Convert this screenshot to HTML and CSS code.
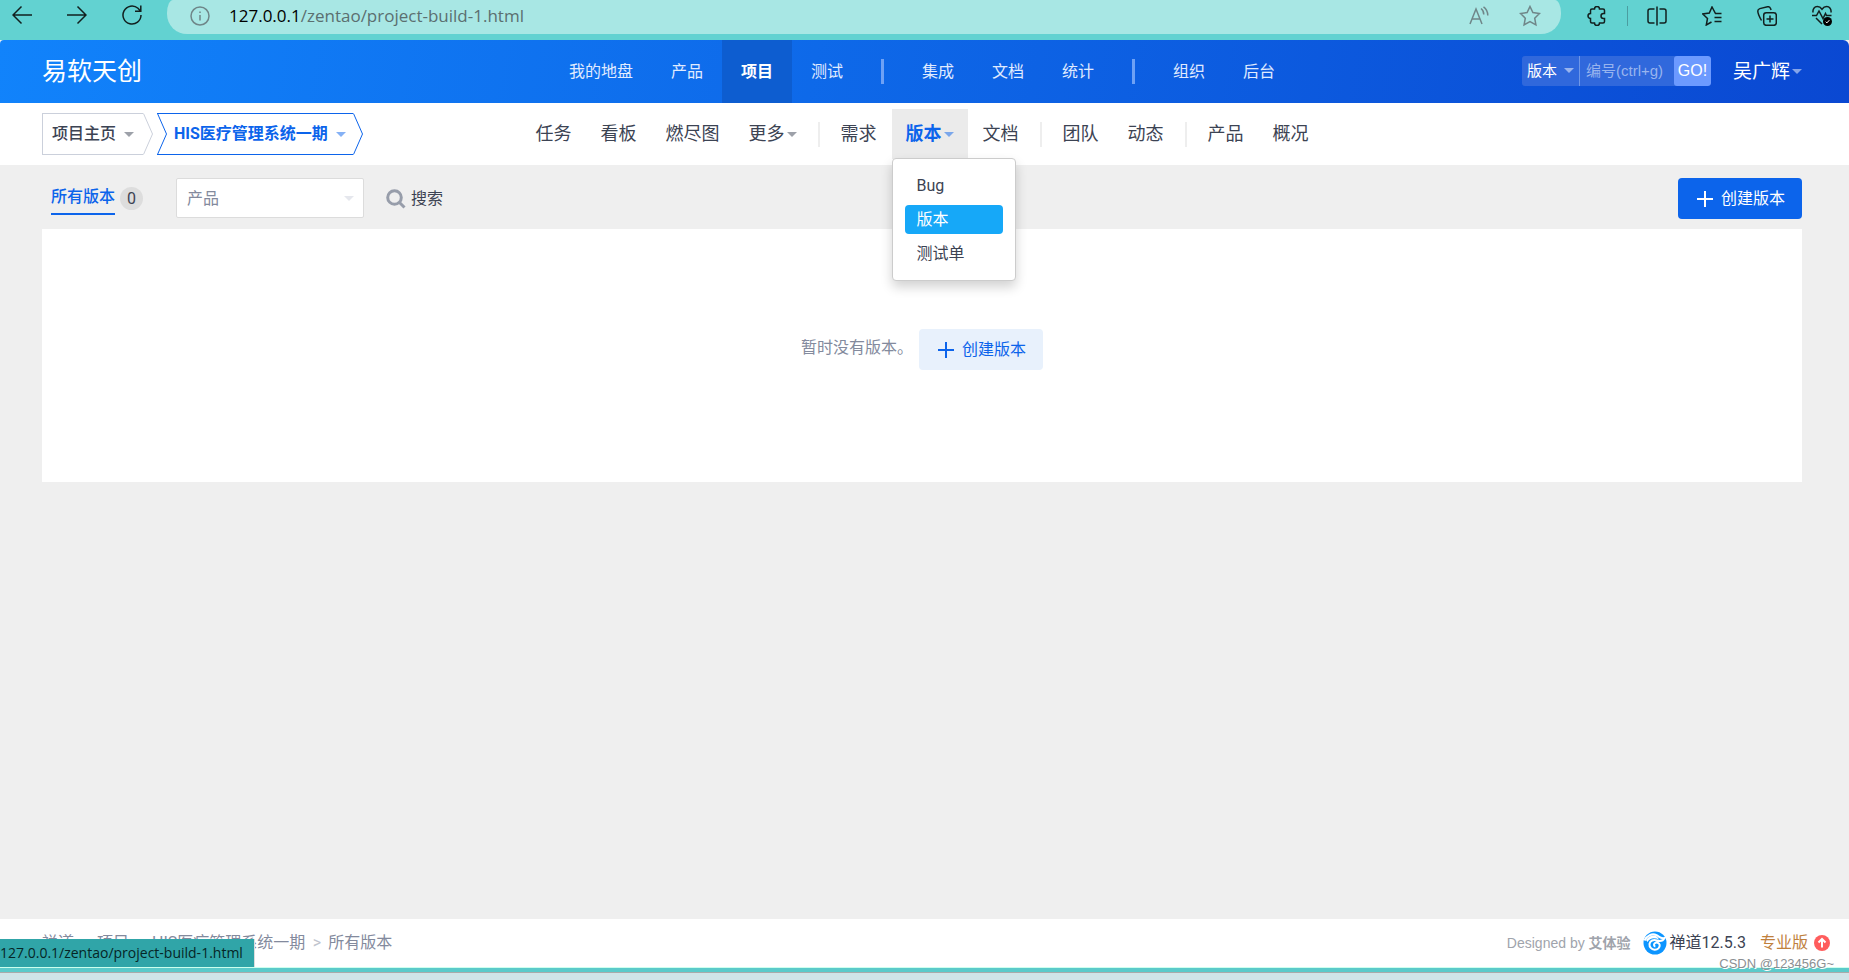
FILE: index.html
```html
<!DOCTYPE html>
<html lang="zh-CN">
<head>
<meta charset="utf-8">
<title>所有版本 - 禅道</title>
<link rel="stylesheet" href="styles.css">
</head>
<body>
<div class="window">
  <div class="browser">
    <button class="tool" aria-label="后退"><svg width="20" height="20" viewBox="0 0 20 20"><path d="M20 10H1M9.500 1.500L1 10l8.500 8.500"/></svg></button>
    <button class="tool" aria-label="前进"><svg width="20" height="20" viewBox="0 0 20 20"><path d="M0 10h19M10.500 1.500L19 10l-8.500 8.500"/></svg></button>
    <button class="tool" aria-label="刷新"><svg width="20" height="20" viewBox="0 0 20 20"><path d="M19 10a9 9 0 1 1-3-6.700L18.500 6M18.800 0.500V6.200H13"/></svg></button>
    <div class="address">
      <svg class="info" width="20" height="20" viewBox="0 0 20 20"><circle cx="10" cy="10" r="9"/><path d="M10 9v5.500M10 5.500v1.500"/></svg>
      <span class="url"><b>127.0.0.1</b>/zentao/project-build-1.html</span>
      <svg width="20" height="20" viewBox="0 0 20 20"><path d="M1 18L7 3l6 15M3.200 13h7.600M12 2.500c2 1.500 2.800 3.500 2.800 6M14.500 0.800c3 2.200 4.300 5 4.300 8.700"/></svg>
      <svg width="22" height="22" viewBox="0 0 22 22"><path d="M11 1.500l2.900 6.100 6.600.9-4.800 4.700 1.200 6.700-5.900-3.200-5.900 3.200 1.200-6.700L1.500 8.500l6.600-.9z"/></svg>
    </div>
    <div class="extensions">
      <button class="tool" aria-label="扩展"><svg width="20" height="20" viewBox="0 0 20 20"><path d="M5 3h2.500a2.500 2.500 0 0 1 5 0H16a1.500 1.500 0 0 1 1.500 1.500v3h-1a2.500 2.500 0 0 0 0 5h1v3A1.500 1.500 0 0 1 16 17h-3.500a2.500 2.500 0 0 1-5 0H5A1.500 1.500 0 0 1 3.500 15.500v-3a2.500 2.500 0 0 1 0-5v-3A1.500 1.500 0 0 1 5 3z"/></svg></button>
      <i class="tool-line"></i>
      <button class="tool" aria-label="分屏"><svg width="20" height="20" viewBox="0 0 20 20"><path d="M10 0.500v19M7.500 3H3a2 2 0 0 0-2 2v10a2 2 0 0 0 2 2h4.500M12.500 3H17a2 2 0 0 1 2 2v10a2 2 0 0 1-2 2h-4.500"/></svg></button>
      <button class="tool" aria-label="收藏夹"><svg width="20" height="20" viewBox="0 0 20 20"><path d="M19.500 7.500h-6L10 1 7.300 7 .8 8l4.700 4.500-1.200 6.500 5.200-3M12.500 11.500h7M12.500 15.500h7"/></svg></button>
      <button class="tool" aria-label="集锦"><svg width="20" height="20" viewBox="0 0 20 20"><rect x="6.700" y="6.700" width="12.600" height="12.600" rx="2.500"/><path d="M13 9.500v7M9.500 13h7M4.500 14.500C2.500 11 .8 7 .8 5c0-1.500.7-2 2-2.400L10.500.8c1.500-.3 2.500.3 3 1.600l.6 1.600"/></svg></button>
      <button class="tool" aria-label="浏览器概要"><svg width="20" height="21" viewBox="0 0 20 21"><path d="M1 7.500C.5 4 2.500 1.500 5.300 1.500c2 0 3.500 1 4.700 2.700 1.200-1.700 2.700-2.700 4.700-2.700C17.500 1.500 19.500 4 19 7.500M0 10.500h4.500L7 6l4 7.500 2.500-5 1 2h5M4 13l6 6"/><circle class="solid" cx="15.500" cy="16.500" r="4.500"/><path class="light" d="M13.700 16.700l1.200 1.200 2.500-2.800"/></svg></button>
    </div>
  </div>

  <header class="header">
    <a class="brand" href="#">易软天创</a>
    <nav class="main-nav">
      <a href="#">我的地盘</a><a href="#">产品</a><a class="active" href="#">项目</a><a href="#">测试</a>
      <i></i>
      <a href="#">集成</a><a href="#">文档</a><a href="#">统计</a>
      <i></i>
      <a href="#">组织</a><a href="#">后台</a>
    </nav>
    <div class="header-right">
      <form class="search">
        <button type="button" class="search-type">版本<span class="caret"></span></button>
        <input type="text" placeholder="编号(ctrl+g)" aria-label="编号">
        <button type="button" class="go">GO!</button>
      </form>
      <a class="user" href="#">吴广辉<span class="caret"></span></a>
    </div>
  </header>

  <div class="sub-header">
    <div class="crumbs">
      <a class="crumb" href="#"><span class="crumb-body">项目主页<span class="caret"></span></span><svg width="10" height="42" viewBox="0 0 10 42"><path d="M0.500 0.500L9.500 21 0.500 41.500"/></svg></a>
      <a class="crumb current" href="#"><svg width="10" height="42" viewBox="0 0 10 42"><path d="M0 .5h10M0 41.500h10M0.500 0.500L9.500 21 0.500 41.500"/></svg><span class="crumb-body">HIS医疗管理系统一期<span class="caret"></span></span><svg width="10" height="42" viewBox="0 0 10 42"><path d="M0.500 0.500L9.500 21 0.500 41.500"/></svg></a>
    </div>
    <nav class="sub-nav">
      <a href="#">任务</a><a href="#">看板</a><a href="#">燃尽图</a><a href="#">更多<span class="caret"></span></a>
      <i></i>
      <a href="#">需求</a>
      <div class="dropdown">
        <a class="active" href="#">版本<span class="caret"></span></a>
        <div class="menu"><a href="#">Bug</a><a class="selected" href="#">版本</a><a href="#">测试单</a></div>
      </div>
      <a href="#">文档</a>
      <i></i>
      <a href="#">团队</a><a href="#">动态</a>
      <i></i>
      <a href="#">产品</a><a href="#">概况</a>
    </nav>
  </div>

  <main class="main">
    <div class="toolbar">
      <a class="all" href="#"><span class="all-label">所有版本</span><span class="badge">0</span></a>
      <div class="picker"><select aria-label="产品"><option>产品</option></select><span class="caret"></span></div>
      <a class="find" href="#"><svg width="20" height="20" viewBox="0 0 20 20"><circle cx="8.500" cy="8.500" r="6.800"/><path d="M13.500 13.500l5 5"/></svg>搜索</a>
      <button class="btn primary"><svg width="16" height="16" viewBox="0 0 16 16"><path d="M8 0v16M0 8h16"/></svg>创建版本</button>
    </div>
    <section class="panel">
      <span class="empty">暂时没有版本。</span>
      <button class="btn soft"><svg width="16" height="16" viewBox="0 0 16 16"><path d="M8 0v16M0 8h16"/></svg>创建版本</button>
    </section>
  </main>

  <footer class="footer">
    <div class="path"><a href="#">禅道</a><i>&gt;</i><a href="#">项目</a><i>&gt;</i><a href="#">HIS医疗管理系统一期</a><i>&gt;</i><span>所有版本</span></div>
    <div class="powered">
      <span class="designed">Designed by <b>艾体验</b></span>
      <a class="version" href="#"><svg width="24" height="24" viewBox="0 0 24 24"><circle cx="12" cy="12" r="11.500" fill="#0c95ff"/><path d="M1.500 9.500C4 4.500 9 2 13.500 4.200c3 1.500 4 3.800 8 2.800-1.500 3-4.500 3.500-7.500 2.500C10.500 8.300 7 9.500 6.500 13c-.3 3 2 5.500 5 5.700 3.300.2 5.500-2.200 5.200-4.700-.4-2.300-3.300-3.200-4.900-1.800-1.300 1.100-1 3 .6 3.300" fill="none" stroke="#fff" stroke-width="2"/><path d="M3 9C6 4.500 11 3.500 14 5.500l2 3C11 6.500 7 7 4.500 11z" fill="#fff"/></svg>禅道12.5.3</a>
      <a class="pro" href="#">专业版<svg width="16" height="16" viewBox="0 0 16 16"><circle cx="8" cy="8" r="8" fill="#ff5d5d"/><path d="M8 12.500V4M4.500 7.500L8 4l3.500 3.500" fill="none" stroke="#fff" stroke-width="2"/></svg></a>
    </div>
    <span class="status">127.0.0.1/zentao/project-build-1.html</span>
    <span class="watermark">CSDN @123456G~</span>
  </footer>
  <div class="taskbar"></div>
</div>
</body>
</html>
```
FILE: styles.css
```css
* { box-sizing: border-box; }
body {
  margin: 0;
  font: 16px/24px Roboto, "Noto Sans CJK SC", sans-serif;
  color: #3c4353;
  background: #efefef;
}
a { color: inherit; text-decoration: none; }
button, input, select { font: inherit; color: inherit; border: 0; margin: 0; padding: 0; background: none; }
i { font-style: normal; }
svg { flex: none; }
.window { display: flex; flex-direction: column; min-height: 100vh; overflow: hidden; }
.caret {
  display: inline-block;
  border: 5px solid transparent;
  border-top-color: currentColor;
  border-bottom: 0;
  opacity: .5;
}

/* browser toolbar */
.browser { display: flex; align-items: flex-start; height: 40px; padding: 0 17px 0 12px; background: #62d2d1; }
.browser svg { display: block; fill: none; stroke: #12201f; stroke-width: 2px; }
.browser .tool svg { stroke-width: 1.5px; }
.tool { display: block; margin: 5px 35px 0 0; }
.browser .solid { fill: #000; stroke: none; }
.browser .light { stroke: #fff; stroke-width: 1px; }
.address {
  flex: 1;
  display: flex;
  align-items: center;
  gap: 20px;
  height: 34px;
  margin-left: -10px;
  padding: 0 20px 2px 23px;
  background: #a8e7e4;
  border-radius: 6px 6px 20px 20px / 13px 13px 20px 20px;
}
.browser .address svg { stroke: #6f8688; stroke-width: 1.5px; margin-right: 10px; }
.browser .address svg:last-child { margin-right: 0; }
.browser .address .info { margin-right: 0; }
.url { flex: 1; margin-left: -1px; font: 17px/24px "Open Sans", sans-serif; color: #5b6f70; }
.url b { font-weight: 400; color: #000; }
.extensions { display: flex; gap: 35px; margin-left: 26px; }
.extensions .tool { margin-right: 0; }
.tool-line { width: 1px; height: 20px; margin: 6px -16px 0 -15px; background: #4b9da0; }

/* header */
.header {
  display: grid;
  grid-template-columns: 1fr auto 1fr;
  align-items: center;
  height: 63px;
  padding: 0 47px 0 42px;
  color: #fff;
  background: linear-gradient(100deg, #1183fb, #0a48d2);
  border-radius: 4px 6px 0 0;
}
.brand { font-size: 25px; line-height: 36px; }
.main-nav { display: flex; align-items: center; }
.main-nav a { padding: 0 19px; line-height: 63px; color: #e0ebff; }
.main-nav .active { font-weight: 700; color: #fff; background: #0d5dd0; }
.main-nav i { width: 3px; height: 25px; margin: 0 19px; background: #6ea1f5; }
.header-right { display: flex; justify-content: flex-end; align-items: center; gap: 22px; }
.search { display: flex; height: 30px; margin-bottom: 2px; border-radius: 3px; overflow: hidden; background: #3068dc; font-size: 15px; }
.search-type { width: 58px; border-right: 1px solid #6e97e8; }
.search-type .caret { margin: 0 0 3px 7px; border-width: 5px 5px 0; }
.search input { width: 94px; padding: 0 6px; font: 15px/24px "Liberation Sans", "Noto Sans CJK SC", sans-serif; }
.search input::placeholder { color: #98b4ee; opacity: 1; }
.go { width: 37px; background: #6c9aff; border-radius: 3px; font: 16px/24px "Liberation Sans", sans-serif; }
.user { display: flex; align-items: center; font-size: 19px; gap: 2px; }

/* second bar */
.sub-header {
  display: grid;
  grid-template-columns: 1fr auto 1fr;
  align-items: center;
  height: 62px;
  padding: 0 47px 0 42px;
  background: #fff;
}
.crumbs { display: flex; gap: 4px; font-weight: 500; }
.crumb { display: flex; height: 42px; color: #3c4353; }
.crumb svg { fill: none; stroke: #cbd0db; }
.crumb-body { display: flex; align-items: center; gap: 8px; padding: 0 9px; border: 1px solid #cbd0db; border-right: 0; }
.current { font-weight: 700; color: #0c64eb; }
.current svg { stroke: #0c64eb; }
.current .crumb-body { padding: 0 7px; border-color: #0c64eb; border-left: 0; }
.sub-nav { display: flex; align-items: center; gap: 1px; font-size: 18px; }
.sub-nav a { display: flex; align-items: center; gap: 2px; padding: 0 14px; line-height: 50px; }
.sub-nav > i { width: 2px; height: 25px; margin: 0 6px; background: #eee; }
.dropdown { position: relative; }
.sub-nav .active { font-weight: 700; color: #0c64eb; background: #ebebeb; }
.menu {
  position: absolute;
  top: calc(100% - 1px);
  left: 0;
  z-index: 2;
  display: flex;
  flex-direction: column;
  gap: 5px;
  width: 124px;
  padding: 12px;
  background: #fff;
  border: 1px solid #ccc;
  border-radius: 4px;
  box-shadow: 0 6px 12px rgba(0, 0, 0, .18);
  font-size: 16px;
}
.menu a { padding: 0 12px; line-height: 29px; border-radius: 4px; }
.menu .selected { color: #fff; background: #16a8f8; }

/* content */
.main { flex: 1; padding: 0 47px 0 42px; }
.toolbar { display: flex; align-items: center; height: 64px; padding: 2px 0 0 9px; }
.all { display: flex; align-items: center; gap: 5px; width: 125px; }
.all-label { font-weight: 500; line-height: 32px; color: #0c64eb; border-bottom: 2px solid #0c64eb; }
.badge { width: 23px; height: 23px; border-radius: 50%; background: #ddd; text-align: center; line-height: 23px; }
.picker { position: relative; width: 188px; }
.picker select { appearance: none; display: block; width: 100%; height: 40px; padding: 2px 10px 0; color: #838a9d; background: #fff; border: 1px solid #dcdcdc; border-radius: 2px; }
.picker .caret { position: absolute; right: 10px; top: 18px; color: #cbd0db; }
.find { display: flex; align-items: center; gap: 5px; margin: 0 auto 0 22px; padding-top: 2px; }
.find svg { fill: none; stroke: #979daa; stroke-width: 3px; }
.btn { display: flex; align-items: center; justify-content: center; gap: 8px; width: 124px; height: 41px; padding: 1px 0 0 2px; border-radius: 4px; }
.btn svg { fill: none; stroke: currentColor; stroke-width: 2px; }
.primary { color: #fff; background: #0c64eb; }
.soft { color: #0c64eb; background: #e8f1fc; }
.panel { display: flex; justify-content: center; align-items: flex-start; gap: 6px; height: 253px; padding-top: 100px; background: #fff; }
.empty { line-height: 38px; color: #838a9d; }

/* footer */
.footer { position: relative; display: flex; align-items: center; justify-content: space-between; height: 49px; padding: 0 19px 0 42px; background: #fff; border-bottom: 1px solid #cfe; }
.path { color: #838a9d; display: flex; }
.path i { width: 23px; text-align: center; color: #c0c4ce; }
.powered { display: flex; align-items: center; }
.designed { margin-right: 12px; font: 14px/24px "Liberation Sans", "Noto Sans CJK SC", sans-serif; color: #a0a4ac; }
.version, .pro { display: flex; align-items: center; gap: 3px; }
.pro { gap: 6px; margin-left: 14px; color: #c0803c; }
.status { position: absolute; left: 0; bottom: 0; height: 28px; padding-right: 11px; font: 14px/28px "Open Sans", sans-serif; color: #062526; background: #30a5a8; border-right: 1px solid #ddd; }
.watermark { position: absolute; right: 15px; bottom: -9px; z-index: 2; font: 13px/24px "Liberation Sans", sans-serif; color: #8b8f92; text-shadow: 1px 1px 0 #fff; }
.taskbar { height: 12px; border-top: 4px solid #5bcaca; background: #d0e4e8; box-shadow: inset 0 1px 0 #aaa; }
```
